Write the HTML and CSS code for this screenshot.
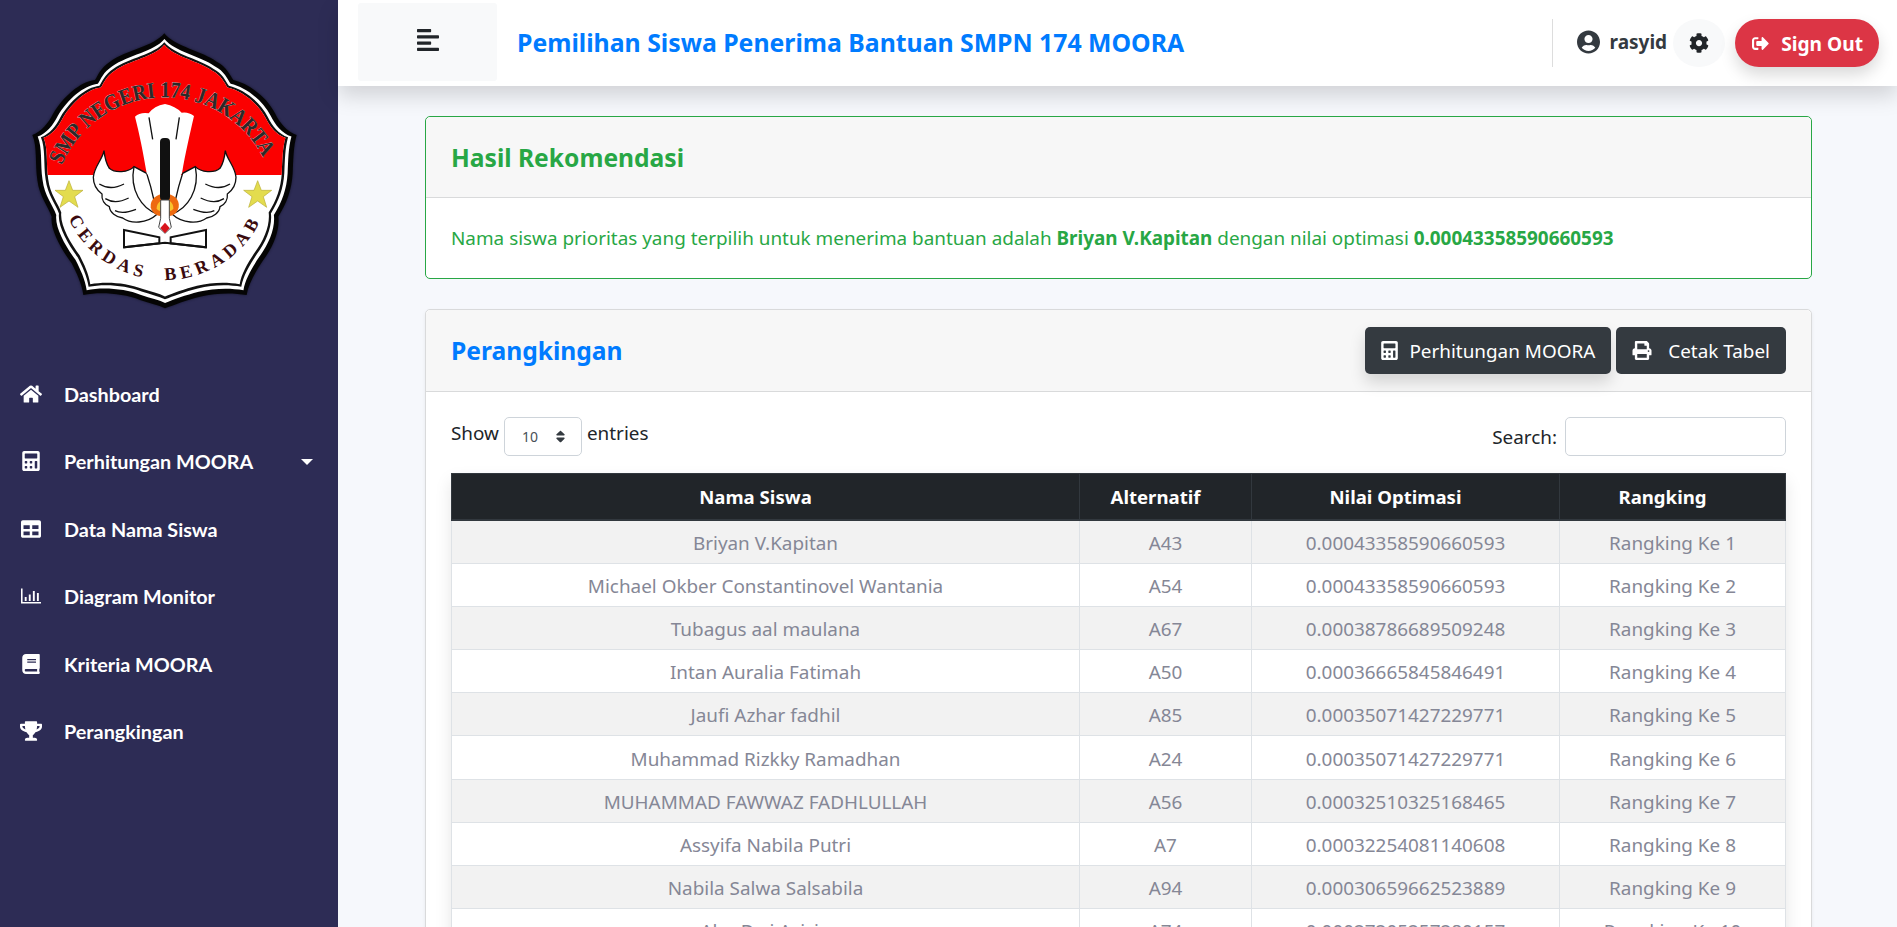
FILE: index.html
```html
<!DOCTYPE html>
<html lang="id">
<head>
  <meta charset="UTF-8" />
  <title>Perangkingan - SMPN 174 MOORA</title>
  <link rel="stylesheet" href="styles.css">
</head>
<body>
  <div class="wrapper">
    <!-- Sidebar -->
    <nav class="sidebar">
      <svg class="logo" viewBox="0 0 1014 990" width="338" height="330">
        <defs>
          <path id="shield" d="M493 100C460 140 380 150 330 185C300 205 295 225 285 240C240 245 190 290 160 340C145 370 125 395 97 405C112 440 105 490 112 540C118 590 145 620 155 650C150 690 185 750 215 790C230 820 245 850 250 885C300 875 370 880 420 900C450 910 475 915 495 925C520 915 560 900 600 890C650 878 700 878 740 885C745 850 770 810 790 780C820 740 840 690 835 650C860 610 875 570 878 520C880 480 880 440 890 405C860 395 840 370 825 340C800 290 745 250 700 240C690 225 680 200 650 185C610 155 525 140 493 100Z"/>
          <clipPath id="upper"><rect x="0" y="0" width="1014" height="525"/></clipPath>
          <path id="arcTop" d="M186 496A333 333 0 0 1 800 496"/>
          <path id="arcBottom" d="M205 655A320 320 0 0 0 785 655"/>
          <polygon id="star" points="0,-42 11,-13 42,-13 17,6 27,38 0,19 -27,38 -17,6 -42,-13 -11,-13"/>
          <g id="wing">
            <path d="M312 452C308 478 282 500 280 532C280 556 292 572 306 582C304 600 314 614 328 620C330 638 348 652 368 654C392 672 440 672 472 642L452 560L440 520L402 500C385 518 345 520 328 505C318 490 314 470 312 452Z"/>
            <path class="wing-line" d="M298 552C320 566 345 566 372 552M316 596C335 608 358 608 386 594M345 632C360 640 378 640 408 628M402 500C388 570 425 625 472 642"/>
          </g>
        </defs>
        <use href="#shield" class="shield-shadow"/>
        <use href="#shield" fill="#050505"/>
        <use href="#shield" fill="#fff" transform="translate(20 21) scale(.96)"/>
        <use href="#shield" fill="#111" transform="translate(32 33) scale(.935)"/>
        <use href="#shield" fill="#fff" transform="translate(42 43) scale(.915)"/>
        <g clip-path="url(#upper)"><use href="#shield" fill="#fb0000" transform="translate(42 43) scale(.915)"/></g>
        <text class="logo-top" textLength="755" lengthAdjust="spacingAndGlyphs"><textPath href="#arcTop" textLength="755" lengthAdjust="spacingAndGlyphs">SMP NEGERI 174 JAKARTA</textPath></text>
        <text class="logo-bottom"><textPath href="#arcBottom" startOffset="50%" text-anchor="middle">CERDAS&#160;&#160;BERADAB</textPath></text>
        <use href="#star" class="logo-star" x="207" y="584"/>
        <use href="#star" class="logo-star" x="773" y="584"/>
        <path d="M372 690L478 712V730L372 742ZM618 690L512 712V730L618 742Z" fill="#fff" stroke="#111" stroke-width="6"/>
        <path d="M372 742L495 728L618 742" fill="none" stroke="#111" stroke-width="6"/>
        <use href="#wing" class="logo-wing"/>
        <use href="#wing" class="logo-wing" transform="translate(988 0) scale(-1 1)"/>
        <path d="M405 350Q420 336 446 340Q462 318 495 312Q526 318 545 338Q566 335 582 348C570 400 556 460 546 520L510 570H478L440 520C430 460 418 400 405 350Z" fill="#fff"/>
        <path class="feather-line" d="M447 352L458 418M538 352L528 418"/>
        <path d="M452 622C450 595 470 585 495 578C520 585 540 595 536 622C532 642 515 650 495 650C475 650 456 642 452 622Z" fill="#ee6a10"/>
        <path d="M470 625C470 610 482 600 495 598C510 600 520 610 520 625C515 640 475 640 470 625Z" fill="#f9c32d"/>
        <rect x="480" y="414" width="30" height="188" rx="12" fill="#111"/>
        <path d="M482 600H508V655L514 682L495 700L476 682L482 655Z" fill="#fff" stroke="#444" stroke-width="3"/>
        <path d="M495 668L509 684L495 700L481 684Z" fill="#d8141c"/>
      </svg>
      <ul class="menu">
        <li><svg class="ico" viewBox="0 0 576 512"><path d="M280.37 148.26L96 300.11V464a16 16 0 0 0 16 16l112.06-.29a16 16 0 0 0 15.92-16V368a16 16 0 0 1 16-16h64a16 16 0 0 1 16 16v95.64a16 16 0 0 0 16 16.05L464 480a16 16 0 0 0 16-16V300L295.67 148.26a12.19 12.19 0 0 0-15.3 0zM571.6 251.47L488 182.56V44.05a12 12 0 0 0-12-12h-56a12 12 0 0 0-12 12v72.61L318.47 43a48 48 0 0 0-61 0L4.34 251.47a12 12 0 0 0-1.6 16.9l25.5 31A12 12 0 0 0 45.15 301l235.22-193.74a12.19 12.19 0 0 1 15.3 0L530.9 301a12 12 0 0 0 16.9-1.6l25.5-31a12 12 0 0 0-1.7-16.93z"/></svg>Dashboard</li>
        <li class="has-caret"><svg class="ico" viewBox="0 0 448 512"><use href="#calc"/></svg>Perhitungan MOORA</li>
        <li><svg class="ico" viewBox="0 0 512 512"><path d="M464 32H48C21.49 32 0 53.49 0 80v352c0 26.51 21.49 48 48 48h416c26.51 0 48-21.49 48-48V80c0-26.51-21.49-48-48-48zM224 416H64v-96h160v96zm0-160H64v-96h160v96zm224 160H288v-96h160v96zm0-160H288v-96h160v96z"/></svg>Data Nama Siswa</li>
        <li><svg class="ico" viewBox="0 0 512 512"><path d="M0 64h40v344h472v40H0zM96 280h48v104H96zM200 216h48v168h-48zM304 128h48v256h-48zM408 176h48v208h-48z"/></svg>Diagram Monitor</li>
        <li><svg class="ico" viewBox="0 0 448 512"><path d="M448 360V24c0-13.3-10.7-24-24-24H96C43 0 0 43 0 96v320c0 53 43 96 96 96h328c13.3 0 24-10.7 24-24v-16c0-7.5-3.5-14.3-8.9-18.7-4.2-15.4-4.2-59.3 0-74.7 5.4-4.3 8.9-11.1 8.9-18.6zM128 134c0-3.3 2.7-6 6-6h212c3.3 0 6 2.7 6 6v20c0 3.3-2.7 6-6 6H134c-3.3 0-6-2.7-6-6v-20zm0 64c0-3.3 2.7-6 6-6h212c3.3 0 6 2.7 6 6v20c0 3.3-2.7 6-6 6H134c-3.3 0-6-2.7-6-6v-20zm253.4 250H96c-17.7 0-32-14.3-32-32 0-17.6 14.4-32 32-32h285.4c-1.9 17.1-1.9 46.9 0 64z"/></svg>Kriteria MOORA</li>
        <li><svg class="ico" viewBox="0 0 576 512"><path d="M552 64H448V24c0-13.3-10.7-24-24-24H152c-13.3 0-24 10.7-24 24v40H24C10.7 64 0 74.7 0 88v56c0 35.7 22.5 72.4 61.9 100.7 31.5 22.7 69.8 37.1 110 41.7C203.3 338.5 240 360 240 360v72h-48c-35.3 0-64 20.7-64 56v12c0 6.6 5.4 12 12 12h296c6.6 0 12-5.4 12-12v-12c0-35.3-28.7-56-64-56h-48v-72s36.7-21.5 68.1-73.6c40.3-4.6 78.7-19 110-41.7 39.3-28.3 61.9-65 61.9-100.7V88c0-13.3-10.7-24-24-24zM99.3 192.8C74.9 175.2 64 155.6 64 144v-16h64.2c1 32.6 5.8 61.2 12.8 86.2-15.1-5.2-29.2-12.4-41.7-21.4zM512 144c0 16.1-17.7 36.1-35.3 48.8-12.7 9.1-26.8 16.3-41.8 21.5 7-25 11.8-53.6 12.8-86.3H512v16z"/></svg>Perangkingan</li>
      </ul>
    </nav>

    <div class="main">
      <!-- Top bar -->
      <header class="topbar">
        <button class="toggle" type="button"><svg viewBox="0 0 448 512"><path d="M12.83 352h262.34A12.82 12.82 0 0 0 288 339.17v-38.34A12.82 12.82 0 0 0 275.17 288H12.83A12.82 12.82 0 0 0 0 300.83v38.34A12.82 12.82 0 0 0 12.83 352zm0-256h262.34A12.82 12.82 0 0 0 288 83.17V44.83A12.82 12.82 0 0 0 275.17 32H12.83A12.82 12.82 0 0 0 0 44.83v38.34A12.82 12.82 0 0 0 12.83 96zM432 160H16a16 16 0 0 0-16 16v32a16 16 0 0 0 16 16h416a16 16 0 0 0 16-16v-32a16 16 0 0 0-16-16zm0 256H16a16 16 0 0 0-16 16v32a16 16 0 0 0 16 16h416a16 16 0 0 0 16-16v-32a16 16 0 0 0-16-16z"/></svg></button>
        <h1 class="brand">Pemilihan Siswa Penerima Bantuan SMPN 174 MOORA</h1>
        <div class="user">
          <svg class="user-ico" viewBox="0 0 496 512"><path d="M248 8C111 8 0 119 0 256s111 248 248 248 248-111 248-248S385 8 248 8zm0 96c48.6 0 88 39.4 88 88s-39.4 88-88 88-88-39.4-88-88 39.4-88 88-88zm0 344c-58.7 0-111.3-26.6-146.5-68.2 18.8-35.4 55.6-59.8 98.5-59.8 2.4 0 4.8.4 7.1 1.1 13 4.2 26.6 6.9 40.9 6.9 14.3 0 28-2.7 40.9-6.9 2.3-.7 4.7-1.1 7.1-1.1 42.9 0 79.7 24.4 98.5 59.8C359.3 421.4 306.7 448 248 448z"/></svg>
          <span class="user-name">rasyid</span>
          <button class="gear" type="button"><svg viewBox="0 0 512 512"><path d="M487.4 315.7l-42.6-24.6c4.3-23.2 4.3-47 0-70.2l42.6-24.6c4.9-2.8 7.1-8.6 5.5-14-11.1-35.6-30-67.8-54.7-94.6-3.8-4.1-10-5.1-14.8-2.3L380.8 110c-17.9-15.4-38.5-27.3-60.8-35.1V25.8c0-5.6-3.9-10.5-9.4-11.7-36.7-8.2-74.3-7.8-109.2 0-5.5 1.2-9.4 6.1-9.4 11.7V75c-22.2 7.9-42.8 19.8-60.8 35.1L88.7 85.5c-4.9-2.8-11-1.9-14.8 2.3-24.7 26.7-43.6 58.9-54.7 94.6-1.7 5.4.6 11.2 5.5 14L67.3 221c-4.3 23.2-4.3 47 0 70.2l-42.6 24.6c-4.9 2.8-7.1 8.6-5.5 14 11.1 35.6 30 67.8 54.7 94.6 3.8 4.1 10 5.1 14.8 2.3l42.6-24.6c17.9 15.4 38.5 27.3 60.8 35.1v49.2c0 5.6 3.9 10.5 9.4 11.7 36.7 8.2 74.3 7.8 109.2 0 5.5-1.2 9.4-6.1 9.4-11.7v-49.2c22.2-7.9 42.8-19.8 60.8-35.1l42.6 24.6c4.9 2.8 11 1.9 14.8-2.3 24.7-26.7 43.6-58.9 54.7-94.6 1.5-5.5-.7-11.3-5.6-14.1zM256 336c-44.1 0-80-35.9-80-80s35.9-80 80-80 80 35.9 80 80-35.9 80-80 80z"/></svg></button>
          <button class="signout" type="button"><svg viewBox="0 0 512 512"><path d="M497 273L329 441c-15 15-41 4.5-41-17v-96H152c-13.3 0-24-10.7-24-24v-96c0-13.3 10.7-24 24-24h136V88c0-21.4 25.9-32 41-17l168 168c9.3 9.4 9.3 24.6 0 34zM192 436v-40c0-6.6-5.4-12-12-12H96c-17.7 0-32-14.3-32-32V160c0-17.7 14.3-32 32-32h84c6.6 0 12-5.4 12-12V76c0-6.6-5.4-12-12-12H96c-53 0-96 43-96 96v192c0 53 43 96 96 96h84c6.6 0 12-5.4 12-12z"/></svg>Sign Out</button>
        </div>
      </header>

      <div class="content">
        <!-- Hasil Rekomendasi -->
        <section class="card card-success">
          <div class="card-header"><h2 class="title-success">Hasil Rekomendasi</h2></div>
          <p class="card-body rec-text">Nama siswa prioritas yang terpilih untuk menerima bantuan adalah <b>Briyan V.Kapitan</b> dengan nilai optimasi <b>0.00043358590660593</b></p>
        </section>

        <!-- Perangkingan -->
        <section class="card">
          <div class="card-header head-row">
            <h2 class="title-primary">Perangkingan</h2>
            <div class="actions">
              <button class="btn btn-shadow" type="button"><svg viewBox="0 0 448 512"><use href="#calc"/></svg>Perhitungan MOORA</button>
              <button class="btn btn-print" type="button"><svg viewBox="0 0 512 512"><path d="M448 192V77.25c0-8.49-3.37-16.62-9.37-22.63L393.37 9.37c-6-6-14.14-9.37-22.63-9.37H96C78.33 0 64 14.33 64 32v160c-35.35 0-64 28.65-64 64v112c0 8.84 7.16 16 16 16h48v96c0 17.67 14.33 32 32 32h320c17.67 0 32-14.33 32-32v-96h48c8.84 0 16-7.16 16-16V256c0-35.35-28.65-64-64-64zm-64 256H128v-96h256v96zm0-224H128V64h192v48c0 8.84 7.16 16 16 16h48v96zm48 72c-13.25 0-24-10.75-24-24 0-13.26 10.75-24 24-24s24 10.74 24 24c0 13.25-10.75 24-24 24z"/></svg>Cetak Tabel</button>
            </div>
          </div>
          <div class="card-body">
            <div class="dt-top">
              <div class="dt-length">Show
                <span class="dt-select">10<svg viewBox="0 0 320 512"><path d="M41 288h238c21.4 0 32.1 25.9 17 41L177 448c-9.4 9.4-24.6 9.4-33.9 0L24 329c-15.1-15.1-4.4-41 17-41zm255-105L177 64c-9.4-9.4-24.6-9.4-33.9 0L24 183c-15.1 15.1-4.4 41 17 41h238c21.4 0 32.1-25.9 17-41z"/></svg></span>
                entries</div>
              <div class="dt-search">Search:<span class="dt-input"></span></div>
            </div>
            <table class="rank-table">
              <thead>
                <tr><th class="col-name">Nama Siswa</th><th class="col-alt">Alternatif</th><th class="col-val">Nilai Optimasi</th><th>Rangking</th></tr>
              </thead>
              <tbody>
                <tr><td>Briyan V.Kapitan</td><td>A43</td><td>0.00043358590660593</td><td>Rangking Ke 1</td></tr>
                <tr><td>Michael Okber Constantinovel Wantania</td><td>A54</td><td>0.00043358590660593</td><td>Rangking Ke 2</td></tr>
                <tr><td>Tubagus aal maulana</td><td>A67</td><td>0.00038786689509248</td><td>Rangking Ke 3</td></tr>
                <tr><td>Intan Auralia Fatimah</td><td>A50</td><td>0.00036665845846491</td><td>Rangking Ke 4</td></tr>
                <tr><td>Jaufi Azhar fadhil</td><td>A85</td><td>0.00035071427229771</td><td>Rangking Ke 5</td></tr>
                <tr><td>Muhammad Rizkky Ramadhan</td><td>A24</td><td>0.00035071427229771</td><td>Rangking Ke 6</td></tr>
                <tr><td>MUHAMMAD FAWWAZ FADHLULLAH</td><td>A56</td><td>0.00032510325168465</td><td>Rangking Ke 7</td></tr>
                <tr><td>Assyifa Nabila Putri</td><td>A7</td><td>0.00032254081140608</td><td>Rangking Ke 8</td></tr>
                <tr><td>Nabila Salwa Salsabila</td><td>A94</td><td>0.00030659662523889</td><td>Rangking Ke 9</td></tr>
                <tr><td>Abu Dwi Aziziq</td><td>A74</td><td>0.00027205257280157</td><td>Rangking Ke 10</td></tr>
              </tbody>
            </table>
          </div>
        </section>
      </div>
    </div>
  </div>

  <!-- shared icon -->
  <svg class="sprite" width="0" height="0"><defs><path id="calc" d="M400 0H48C22.4 0 0 22.4 0 48v416c0 25.6 22.4 48 48 48h352c25.6 0 48-22.4 48-48V48c0-25.6-22.4-48-48-48zM128 435.2c0 6.4-6.4 12.8-12.8 12.8H76.8c-6.4 0-12.8-6.4-12.8-12.8v-38.4c0-6.4 6.4-12.8 12.8-12.8h38.4c6.4 0 12.8 6.4 12.8 12.8v38.4zm0-128c0 6.4-6.4 12.8-12.8 12.8H76.8c-6.4 0-12.8-6.4-12.8-12.8v-38.4c0-6.4 6.4-12.8 12.8-12.8h38.4c6.4 0 12.8 6.4 12.8 12.8v38.4zm128 128c0 6.4-6.4 12.8-12.8 12.8h-38.4c-6.4 0-12.8-6.4-12.8-12.8v-38.4c0-6.4 6.4-12.8 12.8-12.8h38.4c6.4 0 12.8 6.4 12.8 12.8v38.4zm0-128c0 6.4-6.4 12.8-12.8 12.8h-38.4c-6.4 0-12.8-6.4-12.8-12.8v-38.4c0-6.4 6.4-12.8 12.8-12.8h38.4c6.4 0 12.8 6.4 12.8 12.8v38.4zm128 128c0 6.4-6.4 12.8-12.8 12.8h-38.4c-6.4 0-12.8-6.4-12.8-12.8V268.8c0-6.4 6.4-12.8 12.8-12.8h38.4c6.4 0 12.8 6.4 12.8 12.8v166.4zm0-256c0 6.4-6.4 12.8-12.8 12.8H76.8c-6.4 0-12.8-6.4-12.8-12.8V76.8C64 70.4 70.4 64 76.8 64h294.4c6.4 0 12.8 6.4 12.8 12.8v102.4z"/></defs></svg>
</body>
</html>
```

FILE: styles.css
```css
/* ------------------ Global ------------------ */
html, body {
  height: 100%;
  margin: 0;
  overflow: hidden;
}
body {
  font-family: "Noto Sans", Arial, sans-serif;
  font-size: 18.9px;
  color: #212529;
  background: #f6f8fc;
}
button {
  font-family: inherit;
  border: none;
  cursor: pointer;
}
h1, h2, p, ul {
  margin: 0;
  padding: 0;
}
.sprite {
  position: absolute;
}
.wrapper {
  display: flex;
  height: 927px;
}

/* ------------------ Sidebar ------------------ */
.sidebar {
  flex: 0 0 338px;
  background: #2d2c55;
  color: #fff;
}
.logo {
  display: block;
}
.shield-shadow {
  fill: #000;
  opacity: .45;
  filter: blur(5px);
}
.logo-top {
  font: bold 68px "Liberation Serif", serif;
  fill: #2a2a2a;
  stroke: #ddd;
  stroke-width: 1.5px;
  paint-order: stroke;
}
.logo-bottom {
  font: bold 54px "Liberation Serif", serif;
  fill: #3a0a0e;
  letter-spacing: 14px;
}
.logo-star {
  fill: #e3dc4e;
  stroke: #b9ae33;
  stroke-width: 2px;
}
.logo-wing {
  fill: #fff;
  stroke: #111;
  stroke-width: 4px;
}
.wing-line, .feather-line {
  fill: none;
  stroke: #111;
  stroke-width: 4px;
}
.menu {
  list-style: none;
  padding-top: 30px;
}
.menu li {
  display: flex;
  align-items: center;
  height: 67.5px;
  padding-left: 20px;
  font-family: "Lato", sans-serif;
  font-size: 19.8px;
  font-weight: 700;
  position: relative;
}
.ico {
  width: 22px;
  height: 20px;
  margin-right: 22px;
  fill: #fff;
}
.has-caret::after {
  content: "";
  position: absolute;
  right: 25px;
  top: 31px;
  border-top: 6px solid #fff;
  border-left: 6px solid transparent;
  border-right: 6px solid transparent;
}

/* ------------------ Top bar ------------------ */
.main {
  flex: 1;
  min-width: 0;
}
.topbar {
  display: flex;
  align-items: center;
  height: 86px;
  padding: 0 18px 0 20px;
  background: #fff;
  box-shadow: 0 10px 20px rgba(0,0,0,.15);
  position: relative;
}
.toggle {
  width: 139px;
  height: 78px;
  margin-bottom: 2px;
  background: #f8f9fa;
  border-radius: 3px;
}
.toggle svg {
  width: 22px;
  height: 26px;
  fill: #212529;
}
.brand {
  margin-left: 20px;
  margin-bottom: 2px;
  font-size: 24.8px;
  font-weight: 700;
  color: #007bff;
}
.user {
  display: flex;
  align-items: center;
  margin-left: auto;
  height: 48px;
  padding-left: 24px;
  border-left: 1px solid #ddd;
}
.user-ico {
  width: 23px;
  height: 24px;
  fill: #343a40;
  margin-bottom: 2px;
}
.user-name {
  margin-left: 10px;
  margin-bottom: 2px;
  font-size: 19px;
  font-weight: 700;
  color: #343a40;
}
.gear {
  width: 52px;
  height: 48px;
  margin-left: 6px;
  padding: 0;
  border-radius: 50%;
  background: #f8f9fa;
}
.gear svg {
  width: 20px;
  height: 20px;
  fill: #212529;
  vertical-align: middle;
}
.signout {
  display: flex;
  align-items: center;
  height: 48px;
  margin-left: 10px;
  padding: 0 16px;
  border-radius: 24px;
  background: #dc3545;
  color: #fff;
  font-size: 19.2px;
  font-weight: 700;
  box-shadow: 0 8px 16px rgba(0,0,0,.15);
}
.signout svg {
  width: 19px;
  height: 17px;
  margin-right: 11px;
  fill: #fff;
}

/* ------------------ Cards ------------------ */
.content {
  padding: 30px 85px 0 87px;
}
.card {
  background: #fff;
  border: 1px solid #d9dadb;
  border-radius: 5px;
  margin-bottom: 30px;
  box-shadow: 0 2px 4px rgba(0,0,0,.06);
}
.card-success {
  border-color: #28a745;
  box-shadow: none;
}
.card-header {
  height: 80px;
  padding: 0 25px;
  display: flex;
  align-items: center;
  background: #f7f7f7;
  border-bottom: 1px solid #d9dadb;
  border-radius: 5px 5px 0 0;
}
.head-row {
  height: 81px;
  justify-content: space-between;
}
.card-header h2 {
  font-size: 24.6px;
  font-weight: 700;
}
.title-success { color: #28a745; }
.title-primary { color: #007bff; }
.card-body {
  padding: 25px;
}
.rec-text {
  color: #28a745;
  line-height: 30px;
}
.actions {
  display: flex;
  gap: 5px;
}
.btn {
  display: flex;
  align-items: center;
  height: 47px;
  padding: 0 16px;
  border-radius: 5px;
  background: #343a40;
  color: #fff;
  font-size: 18.9px;
}
.btn svg {
  width: 17px;
  height: 19px;
  margin-right: 11px;
  fill: #fff;
}
.btn-print svg {
  width: 20px;
  margin-right: 16px;
}
.btn-shadow {
  box-shadow: 0 8px 16px rgba(0,0,0,.15);
}

/* ------------------ Table ------------------ */
.dt-top {
  display: flex;
  justify-content: space-between;
  height: 56px;
}
.dt-length {
  display: flex;
  align-items: flex-start;
  gap: 5px;
  line-height: 32px;
}
.dt-search {
  display: flex;
  align-items: center;
  gap: 6px;
  height: 39px;
}
.dt-select {
  display: flex;
  align-items: center;
  justify-content: space-between;
  box-sizing: border-box;
  width: 78px;
  height: 39px;
  padding: 0 15px 0 17px;
  border: 1px solid #ced4da;
  border-radius: 5px;
  font-size: 14px;
  color: #495057;
}
.dt-select svg {
  width: 11px;
  height: 15px;
  fill: #343a40;
}
.dt-input {
  box-sizing: border-box;
  width: 221px;
  height: 39px;
  border: 1px solid #ced4da;
  border-radius: 5px;
  margin-left: 2px;
}
.rank-table {
  width: 100%;
  border-collapse: collapse;
  table-layout: fixed;
  box-shadow: 0 8px 16px rgba(0,0,0,.1);
}
.rank-table th {
  box-sizing: border-box;
  height: 46.5px;
  padding: 0 20px 0 0;
  background: #212529;
  color: #fff;
  font-size: 18.6px;
  font-weight: 700;
  border: 1px solid #32383e;
  border-bottom: 2px solid #32383e;
}
.rank-table td {
  height: 40.1px;
  padding: 2px 0 0;
  text-align: center;
  color: #858796;
  border: 1px solid #dee2e6;
}
.rank-table tbody tr:nth-child(odd) {
  background: #f2f2f2;
}
.rank-table tbody tr:nth-child(even) {
  background: #fff;
}
.col-name { width: 628px; }
.col-alt { width: 172px; }
.col-val { width: 308px; }
```
